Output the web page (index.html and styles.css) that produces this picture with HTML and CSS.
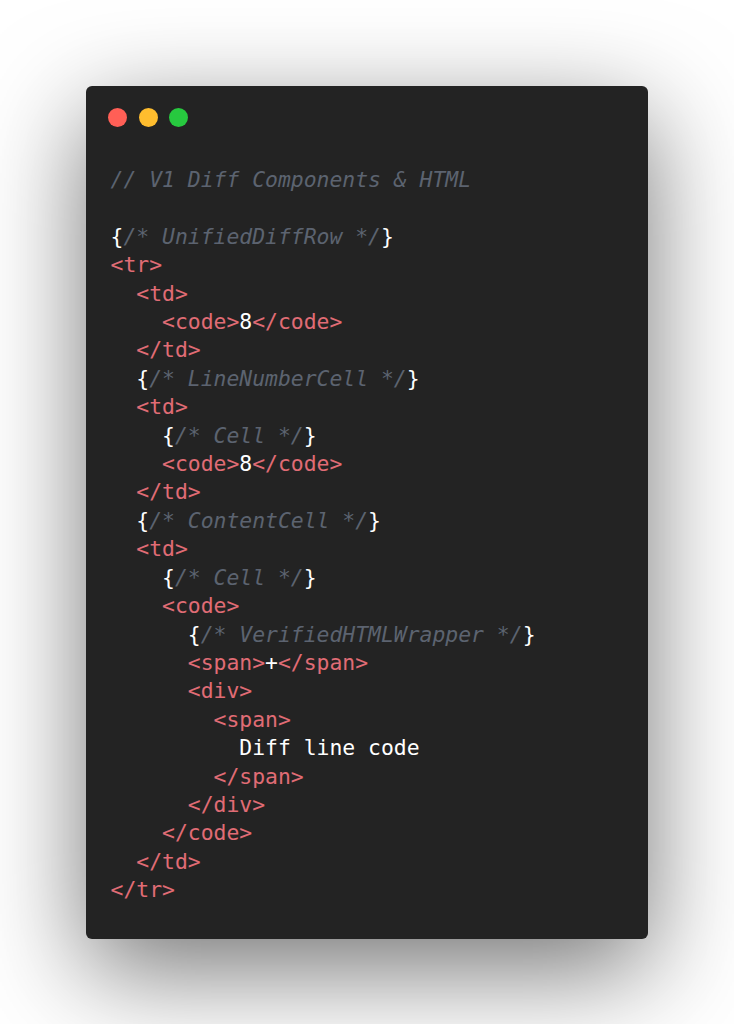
FILE: index.html
```html
<!DOCTYPE html>
<html>
<head>
<meta charset="utf-8">
<link rel="stylesheet" href="styles.css">
</head>
<body>
<div class="stage">
  <div class="window">
    <div class="controls">
      <span class="dot red"></span>
      <span class="dot yellow"></span>
      <span class="dot green"></span>
    </div>
<pre class="code"><span class="c">// V1 Diff Components &amp; HTML</span>

<span class="p">{</span><span class="c">/* UnifiedDiffRow */</span><span class="p">}</span>
<span class="t">&lt;tr&gt;</span>
  <span class="t">&lt;td&gt;</span>
    <span class="t">&lt;code&gt;</span><span class="p">8</span><span class="t">&lt;/code&gt;</span>
  <span class="t">&lt;/td&gt;</span>
  <span class="p">{</span><span class="c">/* LineNumberCell */</span><span class="p">}</span>
  <span class="t">&lt;td&gt;</span>
    <span class="p">{</span><span class="c">/* Cell */</span><span class="p">}</span>
    <span class="t">&lt;code&gt;</span><span class="p">8</span><span class="t">&lt;/code&gt;</span>
  <span class="t">&lt;/td&gt;</span>
  <span class="p">{</span><span class="c">/* ContentCell */</span><span class="p">}</span>
  <span class="t">&lt;td&gt;</span>
    <span class="p">{</span><span class="c">/* Cell */</span><span class="p">}</span>
    <span class="t">&lt;code&gt;</span>
      <span class="p">{</span><span class="c">/* VerifiedHTMLWrapper */</span><span class="p">}</span>
      <span class="t">&lt;span&gt;</span><span class="p">+</span><span class="t">&lt;/span&gt;</span>
      <span class="t">&lt;div&gt;</span>
        <span class="t">&lt;span&gt;</span>
          <span class="p">Diff line code</span>
        <span class="t">&lt;/span&gt;</span>
      <span class="t">&lt;/div&gt;</span>
    <span class="t">&lt;/code&gt;</span>
  <span class="t">&lt;/td&gt;</span>
<span class="t">&lt;/tr&gt;</span></pre>
  </div>
</div>
</body>
</html>
```

FILE: styles.css
```css
html, body {
  margin: 0;
  padding: 0;
  background: #ffffff;
}

.stage {
  padding: 86px 86px 86px 86px;
}

.window {
  width: 562px;
  box-sizing: border-box;
  background: #232323;
  border-radius: 6px;
  padding: 22px 22px 34px 24.5px;
  box-shadow: 0 31px 104px rgba(0, 0, 0, 0.55);
}

.controls {
  display: flex;
  gap: 11.5px;
  height: 19px;
  margin-left: -2.5px;
}

.dot {
  width: 19px;
  height: 19px;
  border-radius: 50%;
  display: block;
}

.red { background: #ff5f56; }
.yellow { background: #ffbd2e; }
.green { background: #27c93f; }

.code {
  margin: 39px 0 0 0;
  font-family: "DejaVu Sans Mono", monospace;
  font-size: 21.4px;
  line-height: 28.4px;
  color: #ffffff;
  white-space: pre;
}

.c {
  color: #5c6370;
  font-style: italic;
}

.t {
  color: #e06c75;
}

.p {
  color: #ffffff;
}
```
